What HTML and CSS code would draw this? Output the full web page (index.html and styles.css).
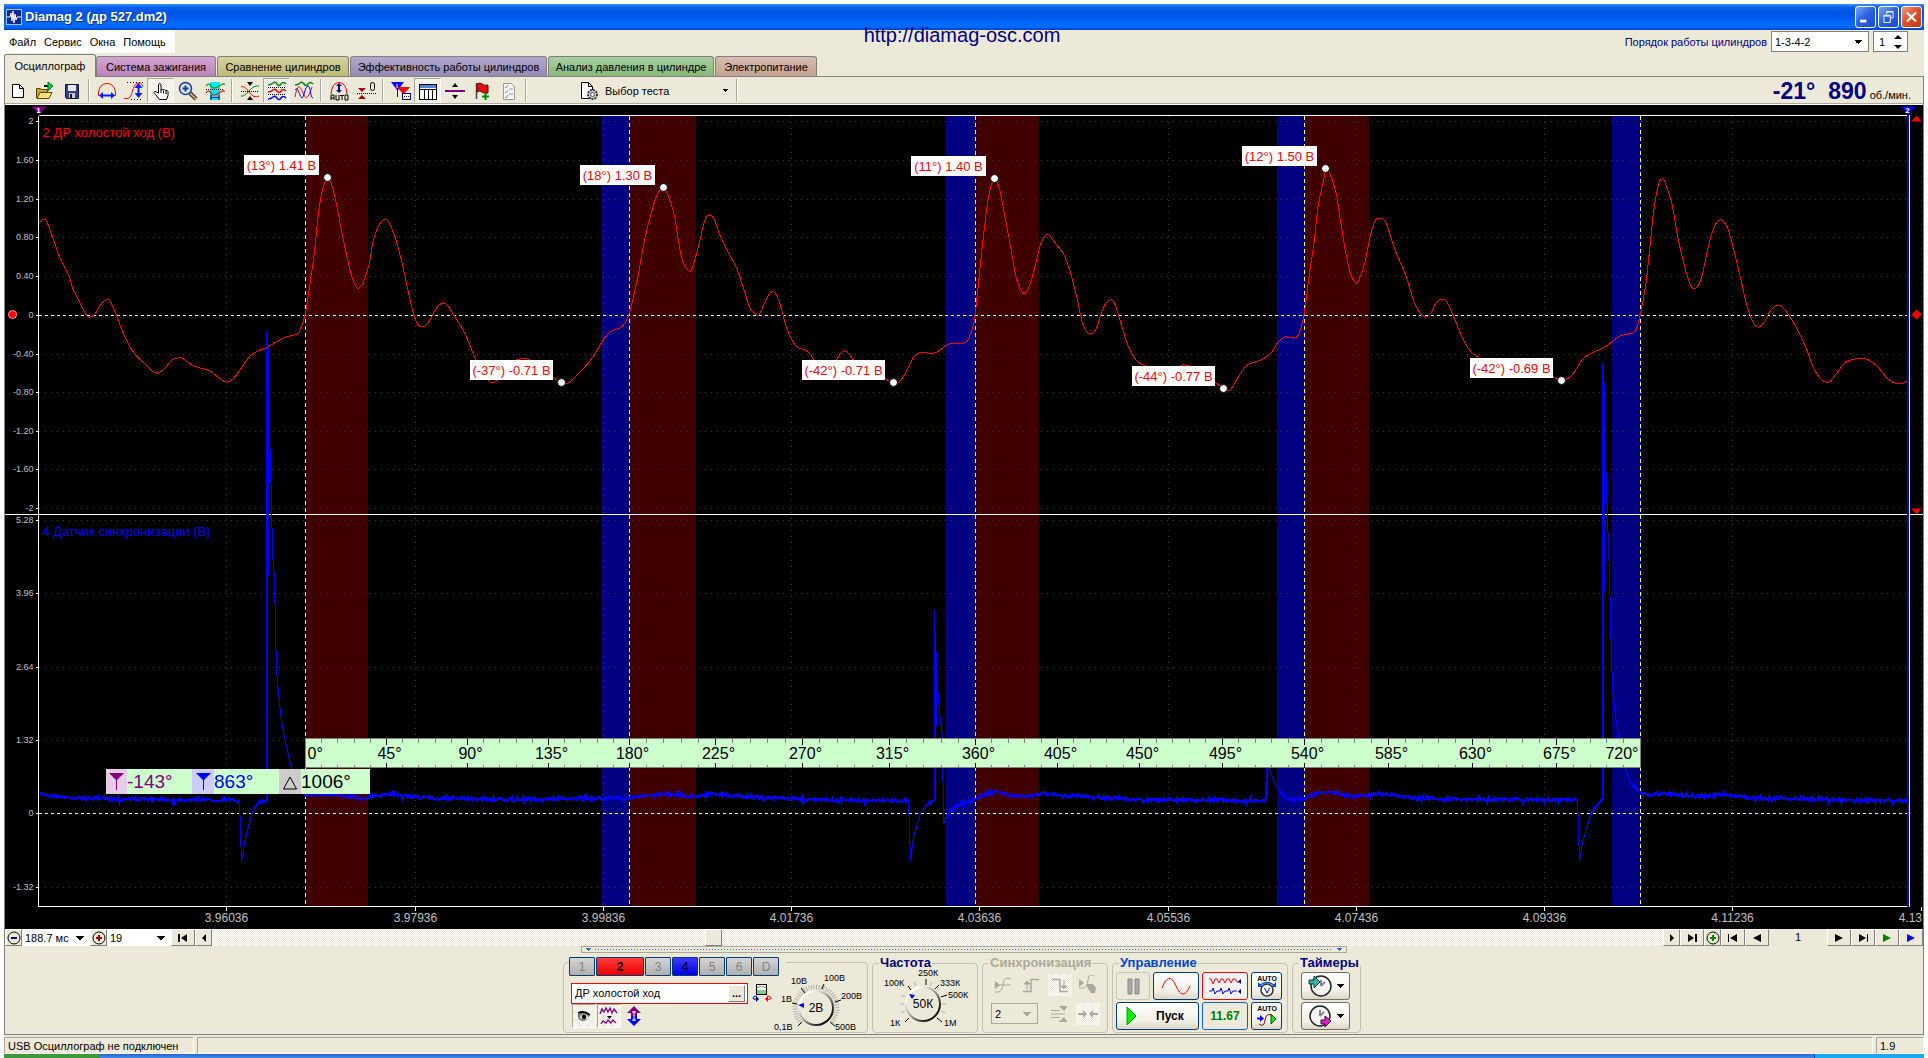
FILE: index.html
```html
<!DOCTYPE html>
<html lang="ru">
<head>
<meta charset="utf-8">
<title>Diamag 2 (др 527.dm2)</title>
<link rel="stylesheet" href="styles.css">
</head>
<body>
<header class="titlebar">
  <svg class="app-icon" viewBox="0 0 16 16"><rect width="16" height="16" rx="1" fill="#0a2a8c"/><rect x=".5" y=".5" width="15" height="15" fill="none" stroke="#9cc2f5"/><path d="M1 8h3l1-4 1 8 1-10 1 12 1-9 1 6 1-3h4" fill="none" stroke="#fff"/></svg>
  <h1>Diamag 2 (др 527.dm2)</h1>
  <div class="win-buttons">
    <button class="win" aria-label="Свернуть"><svg viewBox="0 0 20 22"><rect x="4" y="14" width="7" height="3" fill="#fff"/></svg></button>
    <button class="win" aria-label="Восстановить"><svg viewBox="0 0 20 22" fill="none" stroke="#fff"><path d="M8 8V5h7v7h-3M8 5.500h7"/><path d="M5 9h7v8H5zM5 10h7"/></svg></button>
    <button class="win close" aria-label="Закрыть"><svg viewBox="0 0 20 22"><path d="M5 6l10 10M15 6L5 16" stroke="#fff" stroke-width="2.400"/></svg></button>
  </div>
</header>
<a class="site" href="http://diamag-osc.com">http://diamag-osc.com</a>

<div class="menu-row">
  <nav class="menu"><a href="#">Файл</a><a href="#">Сервис</a><a href="#">Окна</a><a href="#">Помощь</a></nav>
  <div class="order">
    <label for="order">Порядок работы цилиндров</label>
    <select id="order" class="combo order-combo"><option>1-3-4-2</option></select>
    <span class="spin"><input type="text" value="1" aria-label="Номер цилиндра"><svg viewBox="0 0 8 16"><path d="M4 1l4 4H0zM4 15l4-4H0z"/></svg></span>
  </div>
</div>

<nav class="tabs">
  <button class="tab active">Осциллограф</button>
  <button class="tab violet">Система зажигания</button>
  <button class="tab olive">Сравнение цилиндров</button>
  <button class="tab lilac">Эффективность работы цилиндров</button>
  <button class="tab green">Анализ давления в цилиндре</button>
  <button class="tab rose">Электропитание</button>
</nav>

<main class="page">
  <div class="toolbar">
    <button aria-label="Новый"><svg viewBox="0 0 20 20"><path d="M4.500 3.500h7l4 4v9h-11z" fill="#fff" stroke="#000"/><path d="M11.500 3.500v4h4" fill="none" stroke="#000"/></svg></button>
    <button aria-label="Открыть"><svg viewBox="0 0 20 20"><path d="M1.500 17V7.500h4l1 1h6v3" fill="#c8a53c" stroke="#5c4400"/><path d="M2 17.500l3-6h12l-3 6z" fill="#ffe27a" stroke="#5c4400"/><path d="M9 5h4" stroke="#111" stroke-width="2"/><path d="M13 1l5 4-5 5z" fill="#0c4" stroke="#073"/></svg></button>
    <button aria-label="Сохранить"><svg viewBox="0 0 20 20"><path d="M3.500 3.500h13v14h-12l-1-1z" fill="#36427e" stroke="#101840"/><rect x="6" y="4" width="8" height="6" fill="#e4e8f4"/><rect x="7" y="12" width="6" height="5" fill="#c8c8c8"/><rect x="8" y="13" width="2" height="4" fill="#101840"/></svg></button>
    <i></i>
    <button aria-label="Ширина"><svg viewBox="0 0 20 20"><path d="M3 14.500H1.500V11Q3 2.500 10 2.500T18.500 11v3.500H17" fill="none" stroke="red"/><path d="M2 14.500l4-3.500v2.500h8V11l4 3.500-4 3.500v-2.500H6V18z" fill="#0020ff"/></svg></button>
    <button aria-label="Высота"><svg viewBox="0 0 20 20"><path d="M0 17.500h4C9 16 8 4 13 2.500q4-2 6 3" fill="none" stroke="red"/><path d="M3 1.500h16M7 18.500h12" stroke="#000" stroke-dasharray="1 2"/><path d="M14.500 2l4 5h-3v5h3l-4 5-4-5h3V7h-3z" fill="#0020ff"/></svg></button>
    <button class="on" aria-label="Рука"><svg viewBox="0 0 20 20"><path d="M7.500 12V3.500q1.500-2 2.500 0V9q1.500-1 2 0 2-1 2.500.5 2-.5 2.500 1v4l-1.500 4h-7L3 11.500q.5-2 2.500-.5z" fill="#fff" stroke="#000"/><path d="M10 9v3M12.500 9.500v3M15 10v3" stroke="#000"/></svg></button>
    <button aria-label="Лупа"><svg viewBox="0 0 20 20"><path d="M12 12l6 6" stroke="#1a2a50" stroke-width="4"/><path d="M12 12l6 6" stroke="#e0a840" stroke-width="2"/><circle cx="7.500" cy="7.500" r="6" fill="#cfe2fa" stroke="#1c3c90" stroke-width="1.500"/><path d="M7.500 4.500v6M4.500 7.500h6" stroke="#1c3c90" stroke-width="2"/></svg></button>
    <button aria-label="Масштаб окна"><svg viewBox="0 0 20 20"><path d="M5 1h10v18H5z" fill="#00e8ff"/><path d="M1 5q3-4 5 0t8 0 5-1" fill="none" stroke="#078a10" stroke-width="1.200"/><path d="M1 12q3-4 5 0t8 0 5-1" fill="none" stroke="red" stroke-width="1.200"/><path d="M1 8.500h18" stroke="#000" stroke-dasharray="1 1"/><path d="M6 16.500h8M6 14v5M14 14v5" stroke="#006"/></svg></button>
    <i></i>
    <button aria-label="Сжать"><svg viewBox="0 0 20 20"><path d="M1 6q3-2 8 5t10 4" fill="none" stroke="red"/><path d="M1 15q3 1 8-5t10-5" fill="none" stroke="#078a10"/><path d="M1 10.500h18" stroke="#000" stroke-dasharray="1 1"/><path d="M7 1h6l-3 4zM7 19h6l-3-4z"/></svg></button>
    <button class="on" aria-label="Раздельно"><svg viewBox="0 0 20 20" fill="none"><path d="M1 4q3 0 5-2t4 1 4 0 5 0" stroke="#078a10" stroke-width="1.500"/><path d="M1 11q3 0 5-2t4 1 4 0 5 0" stroke="red" stroke-width="1.500"/><path d="M1 18q3 0 5-2t4 1 4 0 5 0" stroke="#00f" stroke-width="1.500"/><path d="M1 6.500h18M1 13.500h18" stroke="#000" stroke-dasharray="1 1"/></svg></button>
    <button aria-label="Совместно"><svg viewBox="0 0 20 20" fill="none"><path d="M1 4q3 0 5-2t4 1 4 0 5 0" stroke="#078a10" stroke-width="1.500"/><path d="M1 16C4 0 6 6 9 12s4 8 9-6" stroke="red"/><path d="M1 9c3-5 5 8 7 8s3-12 6-12 2 12 5 12" stroke="#00f"/></svg></button>
    <i></i>
    <button aria-label="Авто"><svg viewBox="0 0 20 20"><path d="M2 13Q3 1.500 10 1.500T18 13" fill="none" stroke="red"/><path d="M10 2l3 3h-2v4h2l-3 3-3-3h2V5H7z" fill="#001090"/><path d="M2 19v-5h3v5M2 17h3M7 14v5h3v-5M11 14.500h4M13 14v5M16 14h3v5h-3z" fill="none" stroke="#000"/></svg></button>
    <button aria-label="Ноль"><svg viewBox="0 0 20 20"><path d="M2 7h8l-4 4zM2 18h8l-4-4z" fill="#900"/><path d="M1 12.500h19" stroke="#000" stroke-dasharray="1 1"/><rect x="14.500" y="1.500" width="4" height="8" rx="2" fill="none" stroke="#000"/></svg></button>
    <i></i>
    <button aria-label="Маркеры"><svg viewBox="0 0 20 20"><path d="M0 1h13L7 9v7H6V9z" fill="#00f"/><path d="M6 6h13l-6 7v5h-1v-5z" fill="red"/><path d="M6 3v4" stroke="#fff"/><rect x="11.500" y="12.500" width="8" height="6" fill="#fff" stroke="#000090"/><path d="M13 15.500h5" stroke="#000" stroke-dasharray="1 1"/></svg></button>
    <button class="on" aria-label="Таблица"><svg viewBox="0 0 20 20"><rect x="1.500" y="3.500" width="17" height="15" fill="#fff" stroke="#000"/><rect x="2" y="4" width="16" height="3" fill="#4e86d8"/><path d="M2 8.500h16M6.500 8v10M10.500 8v10M14.500 8v10" stroke="#000"/></svg></button>
    <button aria-label="Разделитель"><svg viewBox="0 0 20 20"><path d="M0 9h20v2H0z" fill="purple"/><path d="M10 2l3 4H7zM10 18l3-4H7z"/></svg></button>
    <button aria-label="Флаг"><svg viewBox="0 0 20 20"><path d="M4.500 2v16" stroke="#444" stroke-width="1.500"/><path d="M5 3q3-2 5 0t6 1v8q-4 1-6-1t-5 0z" fill="#e01010" stroke="#700"/><path d="M13.500 12v7M10 15.500h7" stroke="#080" stroke-width="2"/></svg></button>
    <button aria-label="Отчёт"><svg viewBox="0 0 20 20"><path d="M4.500 2.500h8l3 3v13h-11z" fill="#f4f4f0" stroke="#999"/><path d="M6 6l1 1 2-3M6 11l1 1 2-3M6 16l1 1 2-3M10 8h4M10 13h4" fill="none" stroke="#999"/></svg></button>
    <i></i>
    <button class="test"><svg viewBox="0 0 20 20"><path d="M2.500 1.500h7l4 4v12h-11z" fill="#fff" stroke="#000"/><path d="M9.500 1.500v4h4" fill="none" stroke="#000"/><circle cx="13.500" cy="13.500" r="4.500" fill="#ddd" stroke="#333" stroke-width="2" stroke-dasharray="2 1"/><circle cx="13.500" cy="13.500" r="2" fill="#fff" stroke="#444"/></svg><span>Выбор теста</span><b class="caret"></b></button>
    <i></i>
    <div class="rpm"><strong>-21°</strong><strong>890</strong><small>об./мин.</small></div>
  </div>

  <div class="plot"><svg id="plot" role="img" aria-label="Осциллограмма"></svg></div>

  <div class="scrollbar">
    <button class="sb w17" aria-label="Уменьшить"><svg viewBox="0 0 14 14"><circle cx="7" cy="7" r="6" fill="none" stroke="#000"/><path d="M4 7h6" stroke="navy" stroke-width="2"/></svg></button>
    <select class="combo flat range" aria-label="Развёртка"><option>188.7 мс</option></select>
    <button class="sb w17" aria-label="Увеличить"><svg viewBox="0 0 14 14"><circle cx="7" cy="7" r="6" fill="none" stroke="#000"/><path d="M4 7h6M7 4v6" stroke="#900" stroke-width="2"/></svg></button>
    <select class="combo flat step" aria-label="Шаг"><option>19</option></select>
    <button class="sb" aria-label="В начало"><svg viewBox="0 0 14 14"><path d="M2 3h2v8H2zM11 3v8L5 7z"/></svg></button>
    <button class="sb w17" aria-label="Назад"><svg viewBox="0 0 14 14"><path d="M9 3v8L5 7z"/></svg></button>
    <div class="track"><span class="thumb"></span></div>
    <button class="sb w17" aria-label="Вперёд"><svg viewBox="0 0 14 14"><path d="M5 3v8l4-4z"/></svg></button>
    <button class="sb" aria-label="В конец"><svg viewBox="0 0 14 14"><path d="M10 3h2v8h-2zM3 3v8l6-4z"/></svg></button>
    <button class="sb w17" aria-label="Добавить"><svg viewBox="0 0 14 14"><circle cx="7" cy="7" r="6" fill="none" stroke="#000"/><path d="M4 7h6M7 4v6" stroke="#080" stroke-width="2"/></svg></button>
    <button class="sb" aria-label="Первый кадр"><svg viewBox="0 0 14 14"><path d="M2 3h1v8H2zM11 3v8L4 7z"/></svg></button>
    <button class="sb" aria-label="Предыдущий кадр"><svg viewBox="0 0 14 14"><path d="M11 3v8L3 7z"/></svg></button>
    <output class="frame">1</output>
    <button class="sb" aria-label="Следующий кадр"><svg viewBox="0 0 14 14"><path d="M3 3v8l8-4z"/></svg></button>
    <button class="sb" aria-label="Последний кадр"><svg viewBox="0 0 14 14"><path d="M11 3h1v8h-1zM3 3v8l7-4z"/></svg></button>
    <button class="sb" aria-label="Воспроизвести"><svg viewBox="0 0 14 14"><path d="M3 3v8l8-4z" fill="#008000"/></svg></button>
    <button class="sb" aria-label="Воспроизвести всё"><svg viewBox="0 0 14 14"><path d="M3 3v8l8-4z" fill="#00f"/></svg></button>
  </div>

  <section class="controls">
    <div class="splitter"><b class="caret blue"></b><span></span><b class="caret blue"></b></div>
    <div class="groups">
      <section class="group channel">
        <div class="channels"><button>1</button><button class="ch2">2</button><button>3</button><button class="ch4">4</button><button>5</button><button>6</button><button>D</button></div>
        <div class="channel-body">
          <div class="channel-left">
            <div class="name-row">
              <span class="name-box"><input type="text" value="ДР холостой ход" aria-label="Название канала"><button aria-label="Выбрать датчик">...</button></span>
              <svg class="i20" viewBox="0 0 20 20"><rect x="4.500" y="1.500" width="10" height="10" fill="#fff" stroke="#000"/><rect x="5" y="7" width="9" height="4" fill="#7ed07e"/><path d="M6 4v1M8 3v1M11 3v1M13 4v1" stroke="#000"/><path d="M5 13q-4 0-4 2t3 1" fill="none" stroke="navy"/><path d="M4 13v6l3-3z" fill="navy"/><path d="M15 13q4 0 4 2t-3 1" fill="none" stroke="red"/><path d="M16 13v6l-3-3z" fill="red"/></svg>
            </div>
            <div class="toggles">
              <button class="tg on" aria-label="Видимость"><svg viewBox="0 0 20 20"><path d="M4 8q5-4 11 0l1 2-2 1q-1 4-5 4t-5-4z" fill="#777"/><ellipse cx="10" cy="11" rx="4" ry="2.500" fill="#ddd"/><circle cx="10" cy="11" r="2.200"/><path d="M4 7q6-3 12 2" fill="none" stroke="#000" stroke-width="1.500"/></svg></button>
              <button class="tg on" aria-label="Фильтр"><svg viewBox="0 0 20 20"><path d="M1 8l2-5 2 3 2-4 2 4 2-4 2 5 2-4 3 4M2 18l2-3 3 2 2-3 3 3 2-3 3 3" fill="none" stroke="purple" stroke-width="1.300"/><path d="M8 10h5l-2.500 3z"/></svg></button>
              <button class="tg plain" aria-label="Сдвиг"><svg viewBox="0 0 20 20"><path d="M10 0l7 7h-4v3H7V7H3z" fill="purple"/><path d="M10 20l7-7h-4v-3H7v3H3z" fill="#00f"/><path d="M10 5v10M8 6h4M8 14h4" stroke="#fff"/></svg></button>
            </div>
          </div>
          <svg class="knob k1" viewBox="0 0 94 66">
            <defs><linearGradient id="rim" x1="0" y1="0" x2="1" y2="1"><stop offset=".2" stop-color="#fff"/><stop offset=".5" stop-color="#999"/><stop offset=".8" stop-color="#111"/></linearGradient></defs>
            <g transform="translate(43 39)">
              <path class="scale" pathLength="200" d="M-14.800 14.800A21 21 0 1 1 14.800 14.800"/>
              <g class="marks"><path d="M-14 14l-4 4M-19-4l-5-1M-11-15l-4-5M6-19l2-5M19-6l6-2M14 14l5 4"/></g>
              <circle r="18" class="rim"/><circle r="16" class="cap"/>
              <path d="M-18-3l6-2v5z" fill="#00f"/>
              <text y="4" class="val">2В</text>
            </g>
            <g class="lbl"><text x="18" y="15">10В</text><text x="51" y="12">100В</text><text x="68" y="30">200В</text><text x="8" y="33">1В</text><text x="1" y="61">0,1В</text><text x="62" y="61">500В</text></g>
          </svg>
        </div>
      </section>
      <fieldset class="group freq"><legend>Частота</legend>
        <svg class="knob k2" viewBox="0 0 94 66">
          <g transform="translate(44 39)">
            <g class="minor"><path d="M-19 0h-4M-18-7l-4-2M-18 7l-4 2M18 7l4 2M19 0h4M-7-18l-2-4M7-18l2-4"/></g>
            <g class="marks"><path d="M-14 14l-4 4M-12-14l-3-4M3-19v-6M12-15l4-4M18-7l6-2M14 14l5 4"/></g>
            <circle r="18" class="rim"/><circle r="16" class="cap"/>
            <path d="M-14-10l6 1-3 4z" fill="#00f"/>
            <text y="4" class="val">50К</text>
          </g>
          <g class="lbl"><text x="39" y="11">250К</text><text x="5" y="21">100К</text><text x="61" y="21">333К</text><text x="69" y="33">500К</text><text x="11" y="61">1К</text><text x="65" y="61">1М</text></g>
        </svg>
      </fieldset>
      <fieldset class="group sync" disabled><legend>Синхронизация</legend>
        <div class="sync-row">
          <button aria-label="По уровню"><svg viewBox="0 0 20 20"><path d="M2 6v8l5-4z" fill="#aca899"/><path d="M2 17h3Q9 17 10 9t8-5M1 10h17" fill="none" stroke="#aca899"/></svg></button>
          <button aria-label="По фронту"><svg viewBox="0 0 20 20"><path d="M2 16.500h8v-12h8" fill="none" stroke="#aca899" stroke-width="1.500"/><path d="M6 6l3 3H3zM6 8v7" fill="#aca899" stroke="#aca899"/></svg></button>
          <button class="on" aria-label="По спаду"><svg viewBox="0 0 20 20"><path d="M2 4.500h8v12h8" fill="none" stroke="#aca899" stroke-width="1.500"/><path d="M14 14l3-3h-6zM14 5v7" fill="#aca899" stroke="#aca899"/></svg></button>
          <button aria-label="Ручная"><svg viewBox="0 0 20 20"><path d="M1 4v8l5-4z" fill="#aca899"/><path d="M1 13h4q4 0 5-8t6-4" fill="none" stroke="#aca899"/><path d="M9 9l6 0 3 4-1 5h-4l-4-6z" fill="#aca899"/></svg></button>
        </div>
        <div class="sync-row">
          <select class="combo sync-combo" aria-label="Канал синхронизации"><option>2</option></select>
          <button aria-label="Гистерезис"><svg viewBox="0 0 20 20"><path d="M1 6.500h9M1 10h14M1 13.500h9M9 2.500h8M9 17.500h8" stroke="#aca899"/><path d="M10 3h7l-3 4zM10 17h7l-3-4z" fill="#aca899"/></svg></button>
          <button class="on" aria-label="Центр"><svg viewBox="0 0 20 20"><path d="M0 9h5V6l4 4-4 4v-3H0zM20 9h-5V6l-4 4 4 4v-3h5z" fill="#aca899"/></svg></button>
        </div>
      </fieldset>
      <fieldset class="group manage"><legend>Управление</legend>
        <div class="grid">
          <button class="xp dim" disabled aria-label="Пауза"><svg viewBox="0 0 20 20"><path d="M5 3h4v15H5zM12 3h4v15h-4z" fill="#aaa" stroke="#888"/></svg></button>
          <button class="xp" aria-label="Синус"><svg class="wide" viewBox="0 0 30 20"><path d="M1 12Q8-6 15 10t14 0" fill="none" stroke="red"/></svg></button>
          <button class="xp red-edge" aria-label="Волны"><svg class="wide34" viewBox="0 0 34 20"><path d="M1 3h2l2 5 2-5h2l2 4 2-4h2l2 4 2-4h2l2 4 2-4h2l2 3h3" fill="none" stroke="red"/><path d="M1 15h3l1-3 2 6 2-3h3l1-3 2 6 2-3h3l1-3 2 6 2-3h4" fill="none" stroke="#00f"/><path d="M33 3v5l-3-2.500zM33 13v5l-3-2.500z" fill="navy"/></svg></button>
          <button class="xp" aria-label="Авто усиление"><svg class="tall" viewBox="0 0 20 24"><text x="10" y="7" class="auto">AUTO</text><path d="M3 11q7-5 14 0" fill="none" stroke="#0050e0" stroke-width="1.500"/><path d="M1 8v5h5zM19 8v5h-5z" fill="#0050e0"/><circle cx="10" cy="16" r="6" fill="#fff" stroke="#333" stroke-width="1.500"/><path d="M7.500 14l2.500 5 2.500-5" fill="none" stroke="#00f"/></svg></button>
          <button class="xp start"><svg viewBox="0 0 20 20"><path d="M6 1v18l9-9z" fill="#00f000" stroke="#0a0"/></svg><span>Пуск</span></button>
          <button class="xp led">11.67</button>
          <button class="xp" aria-label="Авто запуск"><svg class="tall" viewBox="0 0 20 24"><text x="10" y="7" class="auto">AUTO</text><path d="M0 14.500h5" stroke="#00f" stroke-width="2"/><path d="M3 11v7l4-3.500z" fill="#00f"/><path d="M2 20q5 4 6-4 1-7 6-5" fill="none" stroke="#900"/><path d="M14 10v10l5-5z" fill="#0e0" stroke="#050"/></svg></button>
        </div>
      </fieldset>
      <fieldset class="group timers"><legend>Таймеры</legend>
        <button class="xp gray" aria-label="Таймер запуска"><svg class="tall" viewBox="0 0 24 24"><circle cx="13" cy="12" r="10" fill="#f4f4f4" stroke="#222" stroke-width="1.500"/><path d="M13 12V6M13 12l4-4" stroke="#888" stroke-width="2"/><path d="M1 6h5V2l6 6-6 6v-4H1z" fill="#3cb0a0" stroke="#044"/></svg><b class="caret"></b></button>
        <button class="xp gray" aria-label="Таймер остановки"><svg class="tall" viewBox="0 0 24 24"><circle cx="12" cy="12" r="10" fill="#f4f4f4" stroke="#222" stroke-width="1.500"/><path d="M12 12V6M12 12l4-4" stroke="#888" stroke-width="2"/><path d="M13 16h4v-4l6 5-6 6v-3h-4z" fill="#e020c0" stroke="#404"/></svg><b class="caret"></b></button>
      </fieldset>
    </div>
  </section>
</main>

<footer class="status"><span class="s1">USB Осциллограф не подключен</span><span class="s2"></span><span class="s3">1.9</span></footer>
<div class="taskbar"><span class="go"></span><span class="tray"></span></div>
<script src="chart.js"></script>
</body>
</html>
```

FILE: styles.css
```css
* { box-sizing: border-box; }
html, body { height: 100%; }
body {
  margin: 0;
  padding: 4px 4px 0;
  background: #fff;
  display: flex;
  flex-direction: column;
  position: relative;
  overflow: hidden;
  font: 11px/14px "Liberation Sans", Arial, sans-serif;
  color: #000;
}
button, input, select { font: inherit; color: inherit; margin: 0; padding: 0; border: 0; }
button { background: none; display: flex; align-items: center; justify-content: center; }

.titlebar {
  height: 26px;
  flex: none;
  display: flex;
  align-items: center;
  padding: 0 2px;
  background: linear-gradient(#3a96ff 0, #0a62ee 3px, #0054e3 9px, #005df0 15px, #006dff 20px, #0067fa 23px, #0040c8 26px);
}
.app-icon { width: 16px; height: 16px; }
.titlebar h1 { margin: 0 0 0 3px; flex: 1; font-size: 13px; font-weight: bold; color: #fff; text-shadow: 1px 1px 0 #0a2a8c; }
.win-buttons { display: flex; gap: 2px; }
.win { width: 21px; height: 22px; border: 1px solid #fff; border-radius: 3px; background: linear-gradient(135deg, #7aa4f5, #2a5fe0 50%, #1c4cc8); }
.win svg { width: 20px; height: 20px; }
.win.close { background: linear-gradient(135deg, #f09a80, #dd4e28 50%, #c23a14); }
.site { position: absolute; top: 24px; left: 0; right: 4px; margin: 0 auto; width: max-content; font-size: 20px; line-height: 22px; color: navy; text-decoration: none; }

.menu-row { height: 23px; flex: none; display: flex; justify-content: space-between; background: #ece9d8; }
.menu { display: flex; gap: 8px; align-items: center; background: #fff; padding: 0 9px 0 5px; }
.menu a { color: #000; text-decoration: none; }
.order { display: flex; align-items: center; gap: 4px; padding-right: 16px; color: navy; }
.combo {
  appearance: none;
  height: 21px;
  border: 1px solid #808080;
  border-radius: 0;
  padding: 0 3px;
  color: #000;
  background: #fff conic-gradient(from -45deg at 50% 100%, #000 90deg, transparent 0) no-repeat right 6px center / 8px 4px;
}
.order-combo { width: 98px; }
.spin { display: flex; align-items: center; width: 35px; height: 21px; background: #fff; border: 1px solid #808080; padding: 0 5px; }
.spin input { width: 100%; min-width: 0; color: #000; background: none; }
.spin svg { width: 8px; height: 16px; flex: none; }

.tabs { height: 23px; flex: none; display: flex; align-items: flex-end; gap: 1px; background: #ece9d8; }
.tab { height: 20px; border: 1px solid #808080; border-bottom: 0; border-radius: 3px 3px 0 0; padding: 0 9px; white-space: nowrap; }
.tab.active { height: 23px; width: 92px; margin: 0 -1px -1px 0; background: #ece9d8; position: relative; }
.violet { width: 120px; background: linear-gradient(#d3a3d1, #b885b8); }
.olive { width: 132px; background: linear-gradient(#d3d29e, #bdbb78); }
.lilac { width: 197px; background: linear-gradient(#b0a9cc, #958bb5); }
.green { width: 166px; background: linear-gradient(#a9d0a0, #87b87b); }
.rose { width: 102px; background: linear-gradient(#d8bcb0, #c4a190); }

.page { flex: 1; min-height: 0; display: flex; flex-direction: column; border: 1px solid #808080; background: #ece9d8; }
.toolbar { height: 28px; flex: none; display: flex; align-items: center; border-bottom: 1px solid #fff; box-shadow: inset 0 -1px #aca899; }
.toolbar button { width: 27px; height: 25px; flex: none; }
.toolbar button:first-child { width: 26px; }
.toolbar svg { width: 20px; height: 20px; }
.toolbar > i { flex: none; width: 2px; height: 23px; margin: 0 3px; background: linear-gradient(90deg, #aca899 50%, #fff 50%); }
.on { background: repeating-conic-gradient(#fff 0 25%, #ece9d8 0 50%) 0 0 / 2px 2px; }
.toolbar .on, .tg.on { border: 1px solid #aca899; border-right-color: #fff; border-bottom-color: #fff; }
.toolbar .test { width: 156px; margin-left: 47px; justify-content: flex-start; padding-left: 2px; gap: 6px; }
.caret { width: 7px; height: 4px; background: conic-gradient(from -45deg at 50% 100%, #000 90deg, transparent 0); flex: none; }
.test .caret { width: 5px; height: 3px; margin-left: auto; margin-right: 5px; }
.rpm { margin-left: auto; padding-right: 12px; display: flex; align-items: baseline; gap: 13px; color: navy; }
.rpm strong { font-size: 23px; line-height: 24px; }
.rpm small { font-size: 11px; margin-left: -10px; color: #000; }

.plot { flex: 1; min-height: 0; background: #000; overflow: hidden; }
.plot svg { display: block; width: 100%; height: 100%; font-family: "Liberation Sans", Arial, sans-serif; }
.crisp { shape-rendering: crispEdges; fill: none; }
.grid-line { stroke: #3c3c1c; stroke-dasharray: 1 5; }
.zero { stroke: #fff; stroke-dasharray: 3 3; stroke-width: 1; }
.axis { stroke: #fff; }
.tdc { stroke: #ff3; stroke-dasharray: 4 3; }
.band-red { fill: #400000; }
.band-blue { fill: navy; }
.trace-red { stroke: red; }
.trace-blue { stroke: #00f; }
.noise { stroke: #00f; stroke-width: 2; }
.spike { stroke: #00f; stroke-width: 3; }
.t9 { font-size: 9px; fill: #c0c0c0; }
.t12 { font-size: 12px; fill: #c0c0c0; }
.t13 { font-size: 13px; }
.t16 { font-size: 16px; }
.t19 { font-size: 19px; }
.red { fill: red; }
.blue-fill { fill: #00f; }
.purple-fill { fill: purple; }

.scrollbar { height: 17px; flex: none; display: flex; }
.sb { width: 24px; flex: none; background: #ece9d8; border: 1px solid; border-color: #fff #808080 #808080 #fff; }
.sb.w17 { width: 17px; }
.sb svg { width: 14px; height: 14px; flex: none; }
.combo.flat { height: 17px; border: 0; }
.range { width: 68px; }
.step { width: 64px; }
.track { flex: 1; display: flex; background: repeating-conic-gradient(#fff 0 25%, #ece9d8 0 50%) 0 0 / 2px 2px; }
.track::before { content: ""; width: 34%; }
.thumb { width: 17px; height: 17px; background: #ece9d8; border: 1px solid; border-color: #fff #808080 #808080 #fff; }
.frame { width: 58px; text-align: center; line-height: 17px; flex: none; }

.controls { flex: none; height: 88px; display: flex; flex-direction: column; align-items: center; }
.splitter { width: 766px; height: 7px; flex: none; border: 1px solid #aca899; display: flex; align-items: center; gap: 4px; padding: 0 4px; }
.splitter span { flex: 1; height: 1px; background: repeating-linear-gradient(90deg, #316ac5 0 1px, transparent 1px 3px); }
.caret.blue { width: 5px; height: 3px; background: conic-gradient(from -45deg at 50% 100%, #316ac5 90deg, transparent 0); }
.groups { display: flex; gap: 4px; align-items: flex-end; height: 80px; margin-right: 4px; }
.group { border: 1px solid #c5c2b2; border-radius: 4px; margin: 0; padding: 0; min-width: 0; height: 76px; }
.group legend { font-size: 13px; line-height: 12px; font-weight: bold; color: navy; margin-left: 6px; padding: 0 1px; }
.channel { width: 305px; height: 71px; }
.channels { display: flex; gap: 1px; margin: -6px 0 0 5px; width: 217px; background: #ece9d8; }
.channels button { width: 26px; height: 19px; border: 1px solid #003c74; border-radius: 1px; background: linear-gradient(#d4d4d4, #b0b0b0); color: #808080; font-size: 12px; }
.channels .ch2 { width: 48px; background: linear-gradient(#ff3c3c, #e80000); color: #000; font-weight: bold; }
.channels .ch4 { background: linear-gradient(#3c3cff, #0000e0); color: #000; }
.channel-body { display: flex; padding-left: 7px; }
.channel-left { width: 207px; padding-top: 6px; }
.name-row { display: flex; align-items: center; gap: 4px; height: 22px; }
.name-box { width: 177px; height: 21px; border: 1px solid #f00; background: #fff; display: flex; padding: 1px 2px 1px 3px; }
.name-box input { flex: 1; min-width: 0; }
.name-box button { width: 17px; background: #ece9d8; border: 1px solid; border-color: #fff #808080 #808080 #fff; font-weight: bold; line-height: 8px; }
.i20 { width: 20px; height: 20px; }
.toggles { display: flex; gap: 1px; padding-left: 1px; }
.tg { width: 24px; height: 24px; }
.tg svg { width: 20px; height: 20px; flex: none; }
.knob { width: 94px; height: 66px; margin-top: -7px; display: block; overflow: visible; flex: none; }
.knob .scale { fill: none; stroke: #b5b1a0; stroke-width: 5; stroke-dasharray: 2 3; }
.knob .marks { stroke: #000; }
.knob .minor { stroke: #b5b1a0; }
.knob .rim { fill: url(#rim); }
.knob .cap { fill: #ece9d8; }
.knob .val { font-size: 12px; text-anchor: middle; }
.knob .lbl { font-size: 9px; }
.freq { width: 106px; }
.freq .knob { margin: -4px 0 0 6px; }
.sync { width: 126px; }
.sync legend { color: #aca899; }
.sync-row { display: flex; gap: 4px; padding: 5px 7px 0 8px; height: 29px; justify-content: space-between; }
.sync-row button { width: 24px; height: 22px; flex: none; }
.sync-row svg { width: 20px; height: 20px; }
.sync-combo { width: 47px; background-color: #ece9d8; border-color: #aca899; opacity: 1; background-image: conic-gradient(from -45deg at 50% 100%, #aca899 90deg, transparent 0); margin-right: 6px; }
.manage { width: 176px; }
.manage legend { color: #0046d5; }
.grid { display: grid; grid-template-columns: 34px 46px 46px 31px; gap: 2px 3px; padding: 3px 0 0 3px; }
.xp { height: 28px; border: 1px solid #003c74; border-radius: 3px; background: linear-gradient(#fff, #f2f0e6 70%, #dcd6c4); }
.xp svg { width: 20px; height: 20px; flex: none; }
.xp svg.wide { width: 30px; }
.xp svg.wide34 { width: 34px; }
.xp svg.tall { width: 24px; height: 24px; }
.xp.dim { border-color: #c9c7ba; background: #ece9d8; }
.xp.red-edge { border-color: #f00; background: #f5f3f3; }
.xp.start { grid-column: span 2; font-size: 12px; font-weight: bold; justify-content: flex-start; padding-left: 4px; gap: 15px; }
.xp.led { border-color: #1a62b8; background: #ece9d8; color: #008000; font-size: 12px; font-weight: bold; }
.auto { font-size: 7px; font-weight: bold; text-anchor: middle; }
.timers { width: 69px; }
.timers .xp { width: 49px; margin: 3px 0 0 8px; gap: 5px; border-color: #716f64; }
.timers .xp + .xp { margin-top: 2px; }

.status { height: 19px; flex: none; display: flex; gap: 3px; background: #ece9d8; padding-top: 2px; }
.status span { border-top: 1px solid #aca899; border-left: 1px solid #aca899; border-right: 1px solid #fff; border-bottom: 1px solid #fff; padding-left: 3px; line-height: 16px; }
.s1 { width: 190px; }
.s2 { flex: 1; }
.s3 { width: 48px; }
.taskbar { height: 4px; flex: none; display: flex; justify-content: space-between; background: linear-gradient(#2460d0, #4a90ee); }
.go { width: 96px; background: #3c9a3c; border-radius: 0 4px 0 0; }
.tray { width: 110px; background: #1aa8ee; border-left: 1px solid #0a4a90; }
```

FILE: chart.js
```js
// The trace tables use a 1918 x 824 sheet whose origin is (5, 105).
const SHEET = { x: 5, y: 105, w: 1918, h: 824 };

const red = [39,223,42,220,46,220,50,230,54,241,58,253,63,264,69,276,73,289,80,303,85,313,89,317,95,314,101,304,106,300,110,301,116,314,124,335,134,353,143,362,152,371,158,373,165,368,172,360,178,358,182,358,192,365,200,368,210,371,218,377,226,382,233,379,242,367,250,356,258,351,266,348,278,341,286,337,294,335,299,332,305,315,308,297,312,270,315,247,318,217,322,192,328,178,333,189,337,207,342,233,347,257,352,277,356,287,359,288,363,283,369,265,373,242,378,227,383,220,387,220,391,227,396,240,402,263,408,290,413,312,417,323,422,327,428,323,434,312,439,305,444,303,448,306,455,317,463,330,469,343,475,358,484,375,490,382,495,382,502,375,512,362,520,359,527,359,535,363,547,371,553,377,562,383,568,383,573,379,584,368,593,357,602,342,610,332,620,328,625,323,630,311,638,276,645,238,653,207,658,193,664,189,668,195,674,214,678,238,682,259,689,271,693,266,699,244,705,220,709,215,714,219,721,238,730,256,737,269,744,290,750,308,755,314,759,315,765,302,770,293,775,293,780,304,786,326,792,340,797,347,805,350,811,355,817,366,825,370,836,360,841,353,845,351,850,355,856,363,869,369,880,374,886,379,894,383,899,382,905,374,912,360,919,353,934,353,943,348,949,344,964,343,969,338,974,322,978,288,982,249,987,207,991,186,995,179,1000,191,1005,217,1011,249,1016,277,1021,290,1024,294,1029,287,1035,267,1040,246,1045,236,1049,235,1055,243,1063,253,1070,271,1077,298,1083,325,1090,334,1096,329,1101,314,1106,303,1112,300,1116,307,1123,330,1129,348,1138,362,1151,368,1164,377,1183,365,1198,371,1216,383,1224,389,1230,390,1237,379,1246,366,1255,362,1263,359,1272,352,1278,342,1285,337,1294,338,1299,334,1304,315,1309,277,1314,243,1318,207,1323,183,1326,170,1330,174,1336,193,1341,224,1346,254,1351,275,1356,283,1359,280,1365,262,1370,237,1375,221,1380,218,1386,223,1395,250,1406,276,1414,302,1420,313,1425,317,1431,313,1436,303,1442,299,1447,302,1453,315,1462,337,1471,352,1478,357,1490,368,1505,376,1522,366,1540,368,1555,378,1562,381,1572,375,1585,357,1605,347,1620,336,1633,333,1637,327,1641,311,1646,283,1650,246,1654,209,1659,183,1663,179,1666,185,1672,204,1678,238,1685,268,1691,286,1696,288,1702,276,1707,252,1713,230,1718,221,1723,221,1728,229,1734,251,1741,280,1747,306,1754,324,1759,327,1765,321,1771,310,1778,305,1784,309,1795,325,1806,348,1814,369,1822,380,1829,382,1836,374,1845,363,1855,359,1866,359,1877,366,1888,379,1899,384,1907,381];

const blue = [39,793,50,795,70,797,110,798,170,799,239,799,241,862,245,838,250,818,253,808,259,802,266,799,266,331,268,353,269,430,271,500,272,553,274,578,275,628,276,670,280,713,284,737,291,768,297,785,305,793,330,794,368,797,390,793,420,797,500,799,629,797,665,793,687,796,713,793,743,796,817,799,908,800,910,861,913,837,920,813,927,803,934,800,934,610,935,651,937,685,939,711,942,737,943,824,947,813,956,805,975,799,984,793,995,791,1012,795,1027,796,1042,793,1068,795,1138,799,1265,800,1266,764,1268,767,1274,782,1279,790,1285,797,1293,799,1306,797,1315,793,1328,791,1354,796,1384,793,1414,797,1492,799,1577,799,1579,861,1582,842,1591,811,1602,799,1602,363,1603,382,1605,455,1607,518,1609,575,1611,659,1612,685,1615,717,1619,740,1625,768,1630,782,1639,791,1648,794,1665,793,1700,796,1721,794,1747,797,1834,799,1907,800];

const bands = [["red",306,367],["blue",602,629],["red",630,695],["blue",946,975],["red",976,1038],["blue",1277,1304],["red",1305,1368],["blue",1612,1640]];
const tdc = [305, 629, 975, 1304, 1640];
const times = [[226,"3.96036"],[415,"3.97936"],[603,"3.99836"],[791,"4.01736"],[979,"4.03636"],[1168,"4.05536"],[1356,"4.07436"],[1544,"4.09336"],[1732,"4.11236"],[1921,"4.13"]];
const volts1 = [[121,"2"],[160,"1.60"],[199,"1.20"],[237,"0.80"],[276,"0.40"],[315,"0"],[354,"-0.40"],[392,"-0.80"],[431,"-1.20"],[469,"-1.60"],[508,"-2"]];
const volts2 = [[520,"5.28"],[593,"3.96"],[667,"2.64"],[740,"1.32"],[813,"0"],[887,"-1.32"]];
const peaks = [[327,177,"(13°) 1.41 В"],[663,187,"(18°) 1.30 В"],[994,178,"(11°) 1.40 В"],[1325,168,"(12°) 1.50 В"],[561,382,"(-37°) -0.71 В"],[893,382,"(-42°) -0.71 В"],[1223,388,"(-44°) -0.77 В"],[1561,380,"(-42°) -0.69 В"]];
const angles = [305,386,467,548,629,715,802,889,975,1057,1139,1222,1304,1388,1472,1556,1640];

const svg = document.getElementById("plot");

function draw() {
  const w = svg.clientWidth, h = svg.clientHeight;
  const X = x => Math.round((x - SHEET.x) * w / SHEET.w) + 0.5;
  const Y = y => Math.round((y - SHEET.y) * h / SHEET.h) + 0.5;
  const out = [];
  const line = (x1, y1, x2, y2, c) => out.push(`<path class="crisp ${c}" d="M${x1} ${y1}L${x2} ${y2}"/>`);
  const rect = (x, y, rw, rh, a) => out.push(`<rect x="${x}" y="${y}" width="${rw}" height="${rh}" ${a}/>`);
  const text = (x, y, t, c, a = "start") => out.push(`<text x="${x}" y="${y}" class="${c}" text-anchor="${a}">${t}</text>`);
  const L = X(38), R = X(1909), T = Y(115), B = Y(906), M = Y(514);

  for (const [c, a, b] of bands) rect(X(a) - 0.5, T, X(b) - X(a) + 1, B - T, `class="band-${c}"`);
  times.forEach(([x, t], i) => {
    line(X(x), T, X(x), B, "grid-line");
    line(X(x), B, X(x), B + 4, "axis");
    if (i === times.length - 1) text(w - 1, B + 15, t, "t12", "end");
    else text(X(x), B + 15, t, "t12", "middle");
  });
  for (const [y, t] of [...volts1, ...volts2]) {
    line(L, Y(y), R, Y(y), t === "0" ? "zero" : "grid-line");
    line(L - 3, Y(y), L, Y(y), "axis");
    text(L - 5, Y(y) + 2, t, "t9", "end");
  }
  for (const x of tdc) line(X(x), T, X(x), B, "tdc");
  line(L, T, R, T, "axis");
  line(L, B, R, B, "axis");
  line(L, T, L, B, "axis");
  line(R, T, R, B, "axis");
  line(0, M, w, M, "axis");
  line(R - 2, T - 6, R - 2, B, "noise");
  text(X(42), Y(136), "2 ДР холостой ход (В)", "t13 red");
  text(X(42), Y(535), "4 Датчик синхронизации (В)", "t13 blue-fill");

  // Sync sensor: the flat parts are a dense band of sampling noise, the pulses a thin line.
  let seed = 7;
  const rnd = () => (seed = (seed * 16807) % 2147483647) / 2147483647;
  let pulses = "", flat = "";
  for (let i = 2; i < blue.length; i += 2) {
    const [x0, y0, x1, y1] = blue.slice(i - 2, i + 2);
    if (Math.abs(y1 - y0) < (x1 - x0) * 1.2) {
      flat += `M${X(x0)} ${Y(y0)}`;
      for (let x = x0; x <= x1; x++) {
        const n = (rnd() - 0.5) * 3 + (rnd() > 0.95 ? 2 : 0);
        flat += `L${X(x)} ${Y(y0 + (y1 - y0) * (x - x0) / (x1 - x0) + n)}`;
      }
    } else pulses += `M${X(x0)} ${Y(y0)}L${X(x1)} ${Y(y1)}`;
  }
  out.push(`<path class="crisp noise" d="${flat}"/><path class="crisp trace-blue" d="${pulses}"/>`);
  line(X(267), Y(353), X(267), Y(575), "spike");
  line(X(266), Y(565), X(266), Y(799), "noise");
  line(X(935), Y(651), X(935), Y(725), "spike");
  line(X(934), Y(705), X(934), Y(800), "noise");
  line(X(1603), Y(382), X(1603), Y(590), "spike");
  line(X(1602), Y(583), X(1602), Y(799), "noise");
  line(X(1266), Y(770), X(1266), Y(799), "noise");

  // Vacuum sensor: smooth curve through the samples.
  const p = i => { const k = Math.max(0, Math.min(red.length / 2 - 1, i)) * 2; return [X(red[k]) - 0.5, Y(red[k + 1]) - 0.5]; };
  let d = "M" + p(0).join(" ");
  for (let i = 0; i < red.length / 2 - 1; i++) {
    const [a, b, c, e] = [p(i - 1), p(i), p(i + 1), p(i + 2)];
    d += `C${b[0] + (c[0] - a[0]) / 6} ${b[1] + (c[1] - a[1]) / 6} ${c[0] - (e[0] - b[0]) / 6} ${c[1] - (e[1] - b[1]) / 6} ${c[0]} ${c[1]}`;
  }
  out.push(`<path class="crisp trace-red" d="${d}"/>`);

  for (const [x, y, t] of peaks) {
    const bw = t.length > 12 ? 83 : 75;
    rect(X(x) - 8.5 - bw, Y(y) - 22.5, bw, 20, 'fill="#fff"');
    text(X(x) - 8.5 - bw / 2, Y(y) - 8, t, "t13 red", "middle");
    out.push(`<circle cx="${X(x)}" cy="${Y(y)}" r="4" fill="#fff" stroke="#000"/>`);
  }

  // Crankshaft angle ruler.
  const ry = Y(738);
  rect(X(305), ry, X(1640) - X(305), 29, 'fill="#cfc" stroke="#808080"');
  angles.forEach((x, i) => {
    const last = i === angles.length - 1;
    if (!last) for (let k = 0; k < 5; k++) {
      if (!i && !k) continue;
      const tx = X(x + (angles[i + 1] - x) * k / 5), len = k ? 4 : 6;
      out.push(`<path class="crisp" stroke="${k ? "#808080" : "#000"}" d="M${tx} ${ry}v${len}M${tx} ${ry + 29}v${-len + 1}"/>`);
    }
    if (last) text(X(x) - 2, ry + 20, "720°", "t16", "end");
    else text(i ? X(x) + 3 : X(x) + 2, ry + 20, i * 45 + "°", "t16", i ? "middle" : "start");
  });

  // Cursor readout.
  const rx = X(106) - 0.5, cy = Y(769) - 0.5;
  rect(rx, cy, 264, 25, 'fill="#cfc"');
  rect(rx, cy, 21, 25, 'fill="#e6cce6"');
  rect(rx + 86, cy, 22, 25, 'fill="#ccf"');
  rect(rx + 173, cy, 22, 25, 'fill="#ccc"');
  out.push(`<path d="M${rx + 3} ${cy + 4}h15l-7 7v10h-1v-10z" class="purple-fill"/><path d="M${rx + 90} ${cy + 4}h15l-7 7v10h-1v-10z" class="blue-fill"/><path d="M${rx + 184} ${cy + 8}l6.500 12h-13z" fill="none" stroke="#000"/>`);
  text(rx + 21, cy + 19, "-143°", "t19 purple-fill");
  text(rx + 108, cy + 19, "863°", "t19 blue-fill");
  text(rx + 195, cy + 19, "1006°", "t19");

  // Cursor flags and channel handles.
  out.push(`<path class="purple-fill" d="M${L - 7} ${T - 9}h15l-7 7v3h-1v-3z"/><path class="blue-fill" d="M${R - 9} ${T - 9}h15l-7 7v3h-1v-3z"/>`);
  out.push(`<text x="${L}" y="${T - 3}" font-size="8" font-weight="bold" fill="#fff" text-anchor="middle">1</text><text x="${R - 2}" y="${T - 3}" font-size="8" font-weight="bold" fill="#fff" text-anchor="middle">2</text>`);
  out.push(`<circle cx="${X(12)}" cy="${Y(314)}" r="4" class="red" stroke="#f99"/>`);
  const hx = X(1916);
  out.push(`<path class="red" d="M${hx} ${Y(314) - 5}l5 5-5 5-5-5zM${hx} ${T}l5 6h-10zM${hx} ${M}l5-6h-10z"/>`);

  svg.innerHTML = out.join("");
}

draw();
addEventListener("resize", draw);
```
